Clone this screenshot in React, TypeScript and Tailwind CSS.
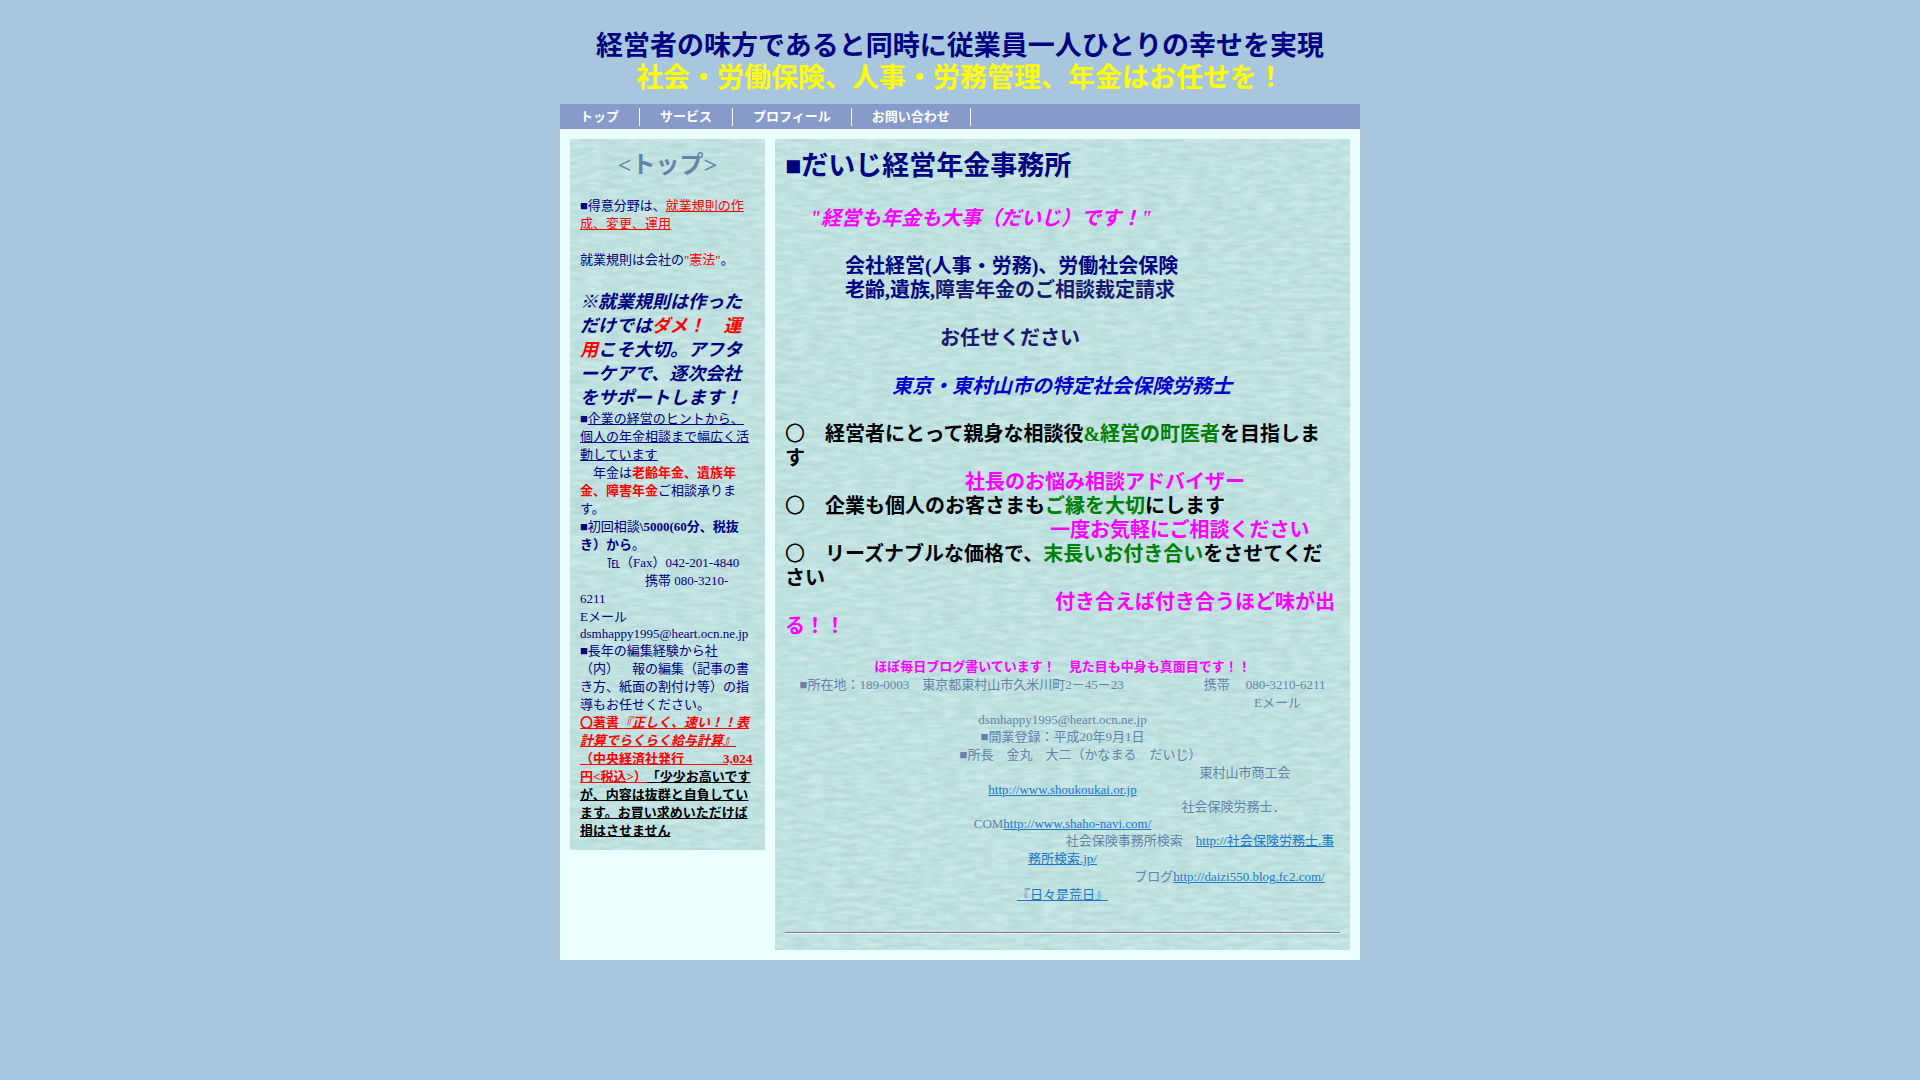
import type { ReactNode } from "react";

const NAV = ["トップ", "サービス", "プロフィール", "お問い合わせ"];

// ripple paper texture drawn behind the panels
function Paper({ id }: { id: string }) {
  return (
    <svg className="absolute inset-0 w-full h-full" aria-hidden="true">
      <filter id={id} x="0" y="0" width="100%" height="100%" colorInterpolationFilters="sRGB">
        <feTurbulence type="fractalNoise" baseFrequency="0.06 0.22" numOctaves="4" seed="11" />
        <feColorMatrix
          values="0.15 0 0 0 0.678
                  0.1 0 0 0 0.834
                  0.1 0 0 0 0.83
                  0 0 0 0 1"
        />
      </filter>
      <rect width="100%" height="100%" filter={`url(#${id})`} />
    </svg>
  );
}

function Panel({ id, className, children }: { id: string; className: string; children: ReactNode }) {
  return (
    <div className={`relative bg-[#bfe2e0] ${className}`}>
      <Paper id={id} />
      <div className="relative p-[10px]">{children}</div>
    </div>
  );
}

function Sidebar() {
  return (
    <Panel id="paper-side" className="w-[195px] shrink-0">
      <h2 className="text-[24px] leading-8 text-center font-bold text-[#6484a8]">&lt;トップ&gt;</h2>
      <div className="mt-4 text-[#000080]">
        <p>■得意分野は、<span className="text-[#ff0000] underline">就業規則の作成、変更、運用</span></p>
        <p className="mt-[18px]">就業規則は会社の<span className="text-[#ff0000]">"憲法"</span>。</p>
        <p className="mt-[21px] text-[18px] leading-6 font-bold italic">
          ※就業規則は作っただけでは<span className="text-[#ff0000]">ダメ！　運用</span>こそ大切。アフターケアで、逐次会社をサポートします！
        </p>
        <p>■<span className="underline">企業の経営のヒントから、個人の年金相談まで幅広く活動しています</span></p>
        <p>　年金は<b className="text-[#ff0000]">老齢年金、遺族年金、障害年金</b>ご相談承ります。</p>
        <p>■初回相談<b>\5000(60分、税抜き）から</b>。</p>
        <p className="pl-[27px]">℡（Fax）042-201-4840</p>
        <p className="indent-[65px]">携帯 080-3210-<br />6211</p>
        <p>Eメール</p>
        <p className="leading-4">dsmhappy1995@heart.ocn.ne.jp</p>
        <p>■長年の編集経験から社（内）　報の編集（記事の書き方、紙面の割付け等）の指導もお任せください。</p>
        <p className="font-bold text-black underline">
          <span className="text-[#ff0000] underline">
            〇著書<i>『正しく、速い！！表計算でらくらく給与計算』</i><br />（中央経済社発行　　　3,024円&lt;税込&gt;）
          </span>
          「少少お高いですが、内容は抜群と自負しています。お買い求めいただけば損はさせません
        </p>
      </div>
    </Panel>
  );
}

function Main() {
  return (
    <Panel id="paper-main" className="flex-1 min-w-0">
      <h1 className="pt-px text-[27px] leading-8 font-bold text-[#000080]">■だいじ経営年金事務所</h1>
      <div className="mt-6 text-[20px] leading-6 font-bold">
        <p className="pl-[25px] italic text-[#ff00ff]">"経営も年金も大事（だいじ）です！"</p>
        <p className="mt-6 pl-[60px] text-[#000080]">会社経営(人事・労務)、労働社会保険</p>
        <p className="pl-[60px] text-[#000080]">老齢,遺族,<span className="text-[#191970]">障害年金のご相談裁定請求</span></p>
        <p className="mt-6 pl-[155px] text-[#191970]">お任せください</p>
        <p className="mt-6 pl-[107px] italic text-[#0000cd]">東京・東村山市の特定社会保険労務士</p>
        <p className="mt-6"><span className="font-normal">〇</span>　経営者にとって親身な相談役<span className="text-[#008000]">&amp;経営の町医者</span>を目指します</p>
        <p className="pl-[180px] text-[#ff00ff]">社長のお悩み相談アドバイザー</p>
        <p><span className="font-normal">〇</span>　企業も個人のお客さまも<span className="text-[#008000]">ご縁を大切</span>にします</p>
        <p className="pl-[265px] text-[#ff00ff]">一度お気軽にご相談ください</p>
        <p><span className="font-normal">〇</span>　リーズナブルな価格で、<span className="text-[#008000]">末長いお付き合い</span>をさせてください</p>
        <p className="indent-[270px] text-[#ff00ff]">付き合えば付き合うほど味が出る！！</p>
      </div>
      <div className="mt-5 text-center text-[#6484a8]">
        <p className="font-bold text-[#ff00ff]">ほぼ毎日ブログ書いています！　見た目も中身も真面目です！！</p>
        <p>■所在地：189-0003　東京都東村山市久米川町2－45－23<span className="ml-[80px]">携帯</span><span className="ml-4">080-3210-6211</span></p>
        <p className="pl-[430px]">Eメール</p>
        <p className="leading-4">dsmhappy1995@heart.ocn.ne.jp</p>
        <p>■開業登録：平成20年9月1日</p>
        <p className="pl-[36px]">■所長　金丸　大二（かなまる　だいじ）</p>
        <p className="pl-[365px]">東村山市商工会</p>
        <p className="leading-4"><a href="#" className="text-[#1e78c8] underline">http://www.shoukoukai.or.jp</a></p>
        <p className="pl-[342px]">社会保険労務士．</p>
        <p className="leading-4">COM<a href="#" className="text-[#1e78c8] underline">http://www.shaho-navi.com/</a></p>
        <p className="indent-[275px]">社会保険事務所検索　<a href="#" className="text-[#1e78c8] underline">http://社会保険労務士.事務所検索.jp/</a></p>
        <p className="pl-[334px]">ブログ<a href="#" className="text-[#1e78c8] underline">http://daizi550.blog.fc2.com/</a></p>
        <p><a href="#" className="text-[#1e78c8] underline">『日々是荒日』</a></p>
      </div>
      <hr className="mt-7 mb-[6px] border-t border-[#808080] border-b border-b-[#eeeeee]" />
    </Panel>
  );
}

export default function App() {
  return (
    <div lang="ja" className="min-h-screen bg-[#a9c6df] pt-[30px] font-['Liberation_Serif','Noto_Sans_CJK_JP',serif] text-[13px] leading-[18px] [text-spacing-trim:space-all]">
      <div className="max-w-[800px] mx-auto">
        <header className="h-[74px] text-center text-[27px] leading-8 font-bold">
          <p className="text-[#000080]">経営者の味方であると同時に従業員一人ひとりの幸せを実現</p>
          <p className="text-[#ffff00]">社会・労働保険、人事・労務管理、年金はお任せを！</p>
        </header>
        <nav className="flex pt-1 pb-[3px] bg-[#869bc9]">
          {NAV.map(label => (
            <a key={label} href="#" className="px-5 border-r border-white text-white font-bold">{label}</a>
          ))}
        </nav>
        <div className="flex items-start gap-[10px] p-[10px] bg-[#ecffff]">
          <Sidebar />
          <Main />
        </div>
      </div>
    </div>
  );
}
